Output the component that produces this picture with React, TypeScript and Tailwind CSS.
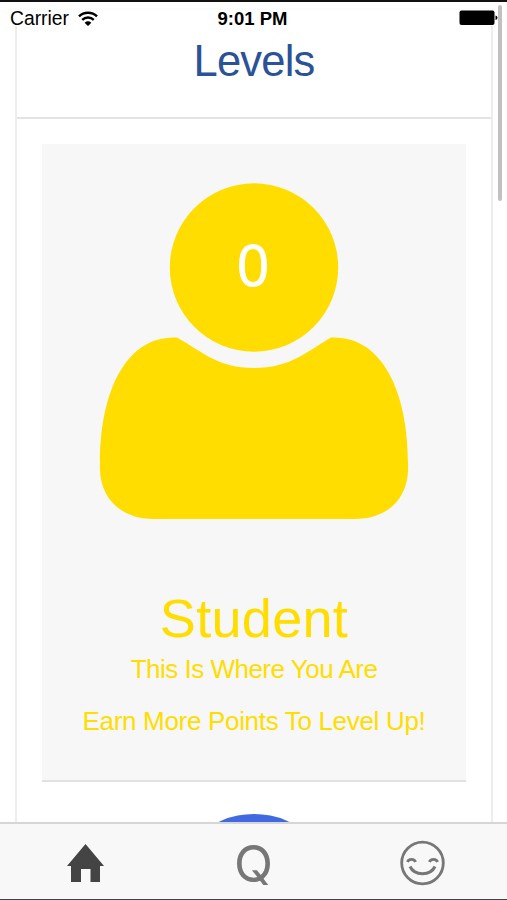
function WifiIcon() {
  return (
    <svg width="20" height="16" viewBox="0 0 20 16" fill="none" stroke="#000" strokeWidth="2.4" aria-hidden>
      <path d="M1 5.4C6 .6 14 .6 19 5.4" />
      <path d="M4.2 8.9C7.5 5.7 12.5 5.7 15.8 8.9" />
      <path d="M10 15 6.6 11.8Q10 8.9 13.4 11.8Z" fill="#000" stroke="none" />
    </svg>
  );
}

function BatteryIcon() {
  return (
    <svg width="40" height="16" viewBox="0 0 40 16" aria-hidden>
      <rect x="0.5" y="0.5" width="35" height="14.5" rx="2" fill="#000" />
      <path d="M36.5 5.5Q38.5 6 38.5 7.8T36.5 10Z" fill="#000" />
    </svg>
  );
}

function PersonIcon() {
  return (
    <svg width="310" height="338" viewBox="99 183 310 338" fill="#ffdd00" className="block" aria-hidden>
      <circle cx="254" cy="267.5" r="84.2" />
      <path d="M177 337.5C203 352 218 368 254 368S306 352 331 337.5C381 335 408 390 408 463C410 497 389 519 354 519H154C120 519 98 497 100 463C100 390 127 335 177 337.5Z" />
    </svg>
  );
}

function StatusBar() {
  return (
    <header className="absolute inset-x-0 top-0 z-10 grid h-[26px] grid-cols-3 items-start border-t-2 border-[#111] bg-white/75 pt-[7px] text-black">
      <div className="flex items-center gap-[9px] pl-[10px]">
        <span className="text-[19.3px] leading-5">Carrier</span>
        <WifiIcon />
      </div>
      <div className="pr-[2px] text-center text-[18.5px] leading-5 font-bold">9:01 PM</div>
      <div className="flex justify-end pt-px pr-2">
        <BatteryIcon />
      </div>
    </header>
  );
}

function TabBar() {
  return (
    <nav className="absolute inset-x-0 bottom-0 z-10 grid h-[78px] grid-cols-3 items-center justify-items-center border-t-2 border-b border-t-[#d6d6d6] border-b-[#444] bg-[#f8f8f8] pt-px">
      <button aria-label="Home">
        <svg width="38" height="40" viewBox="0 0 38 40" fill="#444" aria-hidden>
          <path d="M19.5 2 38 24H34V40H24.5V27H15V40H5V24H1Z" />
        </svg>
      </button>
      <button className="pt-[2px] font-['Inter',sans-serif] text-[51px] leading-none text-[#777]">Q</button>
      <button aria-label="Profile" className="pt-[2px]">
        <svg width="46" height="46" viewBox="0 0 46 46" fill="none" stroke="#777" strokeWidth="2.8" aria-hidden>
          <circle cx="22.5" cy="23" r="20.8" />
          <path d="M10 26.5C14.5 36 30.5 36 35 26.5" strokeWidth="3" />
          <path d="M7.5 22C8.5 18.5 14.5 18.5 15.5 22M29.5 22C30.5 18.5 36.5 18.5 37.5 22" />
        </svg>
      </button>
    </nav>
  );
}

function LevelCard() {
  return (
    <article className="flex h-[638px] flex-col items-center border-b-2 border-[#e1e1e1] bg-[#f7f7f7] pt-[39px] text-[#ffdd00]">
      <div className="relative">
        <PersonIcon />
        <span className="absolute inset-x-0 top-[51px] pr-[2px] text-center font-['Open_Sans',sans-serif] text-[57px] leading-[60px] font-medium text-white [-webkit-text-stroke:1px_#fff]">
          0
        </span>
      </div>
      <h2 className="mt-[67px] text-[54px] leading-[60px] tracking-[0.3px]">Student</h2>
      <p className="mt-[6px] text-[26px] leading-[30px] tracking-[-0.5px]">This Is Where You Are</p>
      <p className="mt-[22px] text-[26px] leading-[30px] tracking-[-0.32px]">Earn More Points To Level Up!</p>
    </article>
  );
}

export default function App() {
  return (
    <div className="relative flex h-[900px] w-[507px] flex-col overflow-hidden bg-white pt-[8px] font-['Liberation_Sans',Arial,sans-serif]">
      <StatusBar />
      <main className="mr-[14px] ml-[15px] h-[814px] border-2 border-b-0 border-[#ededed]">
        <div className="flex h-[109px] justify-center border-b-2 border-[#e3e3e3] pt-[26px]">
          <h1 className="text-[43.5px] leading-[50px] tracking-[-0.8px] text-[#2b5297]">Levels</h1>
        </div>
        <div className="px-[25px] pt-[25px]">
          <LevelCard />
          <div className="flex h-[60px] justify-center pt-[32px]">
            <div className="size-[168px] shrink-0 rounded-full bg-[#4169e1]" />
          </div>
        </div>
      </main>
      <TabBar />
      <div className="absolute top-[5px] left-[498px] z-20 h-[196px] w-[4px] rounded-full bg-[#c1c1c1]" />
    </div>
  );
}
